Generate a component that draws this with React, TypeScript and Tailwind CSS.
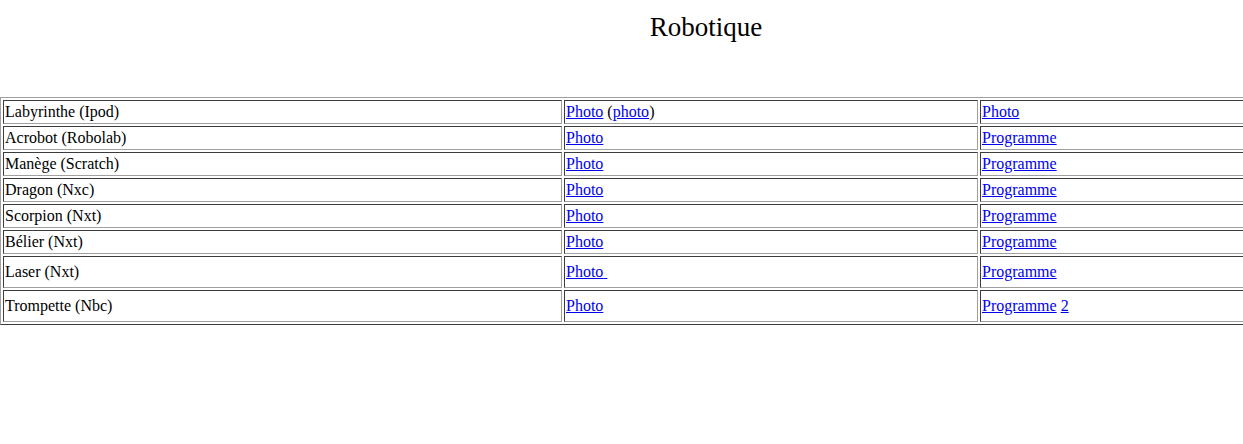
const rows: { name: string; photo: React.ReactNode; prog: React.ReactNode; tall?: boolean }[] = [
  {
    name: 'Labyrinthe (Ipod)',
    photo: (
      <>
        <a href="#">Photo</a> (<a href="#">photo</a>)
      </>
    ),
    prog: <a href="#">Photo</a>,
  },
  { name: 'Acrobot (Robolab)', photo: <a href="#">Photo</a>, prog: <a href="#">Programme</a> },
  { name: 'Manège (Scratch)', photo: <a href="#">Photo</a>, prog: <a href="#">Programme</a> },
  { name: 'Dragon (Nxc)', photo: <a href="#">Photo</a>, prog: <a href="#">Programme</a> },
  { name: 'Scorpion (Nxt)', photo: <a href="#">Photo</a>, prog: <a href="#">Programme</a> },
  { name: 'Bélier (Nxt)', photo: <a href="#">Photo</a>, prog: <a href="#">Programme</a> },
  { name: 'Laser (Nxt)', photo: <a href="#">Photo{'\u00a0'}</a>, prog: <a href="#">Programme</a>, tall: true },
  {
    name: 'Trompette (Nbc)',
    photo: <a href="#">Photo</a>,
    prog: (
      <>
        <a href="#">Programme</a> <a href="#">2</a>
      </>
    ),
    tall: true,
  },
];

const cell =
  'border border-t-[#3c3c3c] border-l-[#3c3c3c] border-b-[#a0a0a0] border-r-[#a0a0a0] px-[1px] py-0 align-middle text-left leading-[18px]';

export default function App() {
  return (
    <div className="w-[1412px] bg-white text-black font-['Liberation_Serif','Times_New_Roman',serif] text-[16px]">
      {/* Titre */}
      <h1 className="pt-[12px] text-center text-[27px] leading-[30px] font-normal">Robotique</h1>

      <table className="mt-[55px] w-[1412px] table-fixed border-separate border-spacing-[2px] border border-t-[#a0a0a0] border-l-[#a0a0a0] border-b-[#3c3c3c] border-r-[#3c3c3c] [&_a]:text-[#0000ee] [&_a]:underline">
        <colgroup>
          <col className="w-[559px]" />
          <col className="w-[414px]" />
          <col />
        </colgroup>
        <tbody>
          {rows.map((r) => (
            <tr key={r.name} className={r.tall ? 'h-[32px]' : 'h-[24px]'}>
              <td className={cell}>{r.name}</td>
              <td className={cell}>{r.photo}</td>
              <td className={cell}>{r.prog}</td>
            </tr>
          ))}
        </tbody>
      </table>
    </div>
  );
}
